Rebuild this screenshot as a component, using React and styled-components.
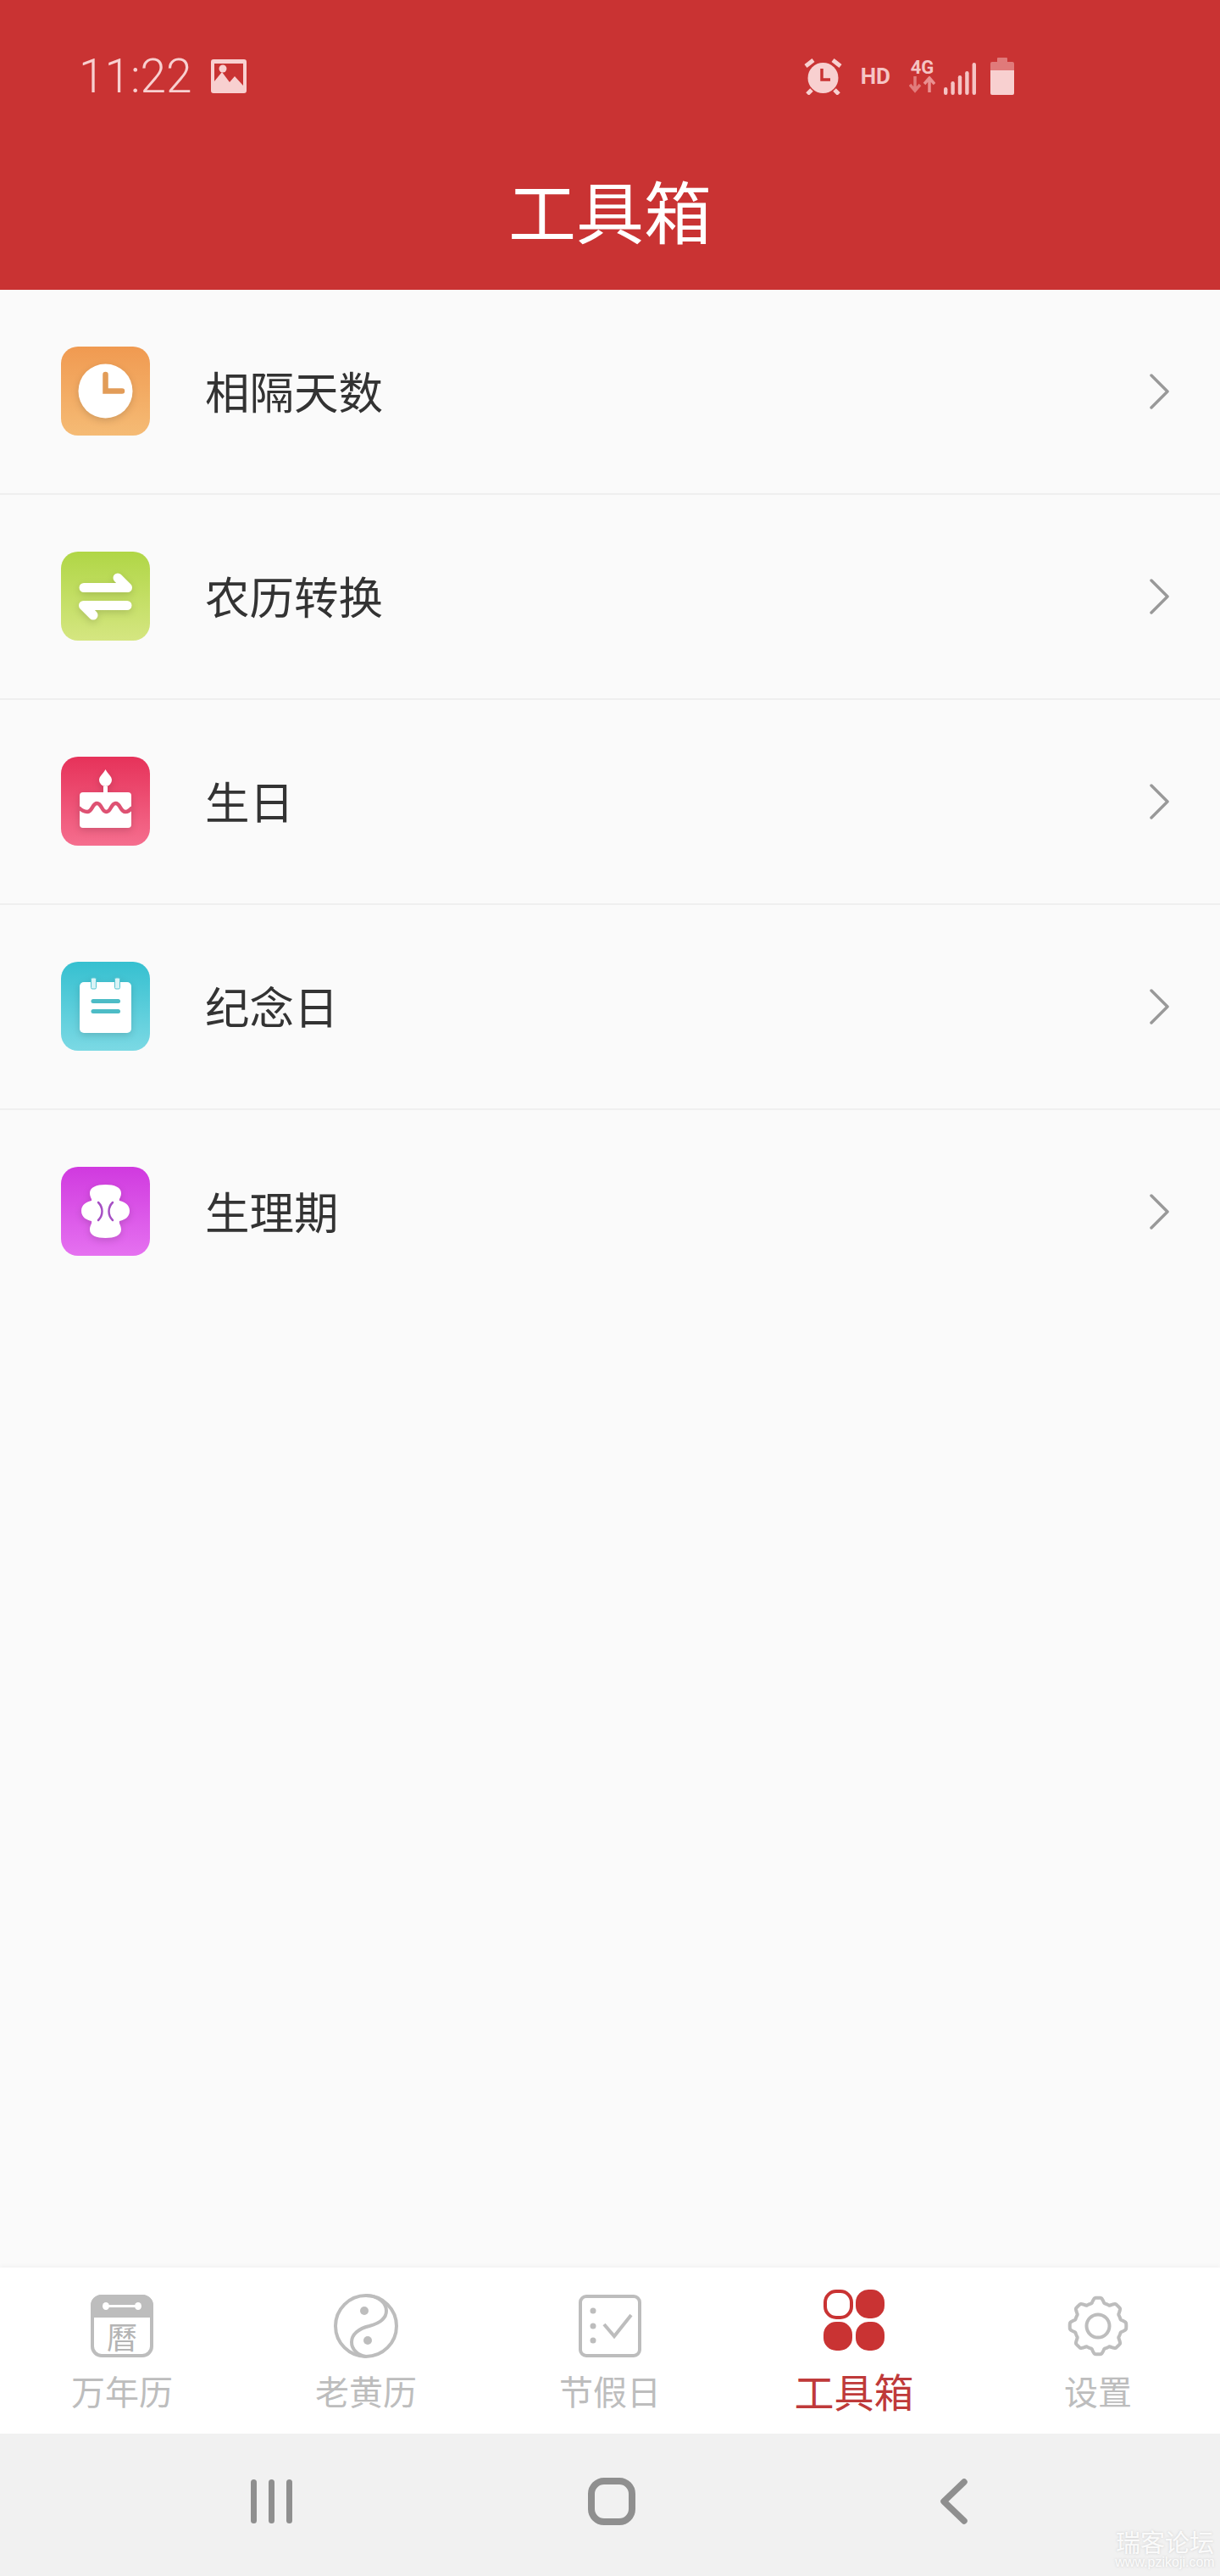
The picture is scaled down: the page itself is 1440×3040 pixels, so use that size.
import React from 'react';
import styled, { createGlobalStyle } from 'styled-components';

const CJK = `"Noto Sans CJK SC", "Noto Sans", sans-serif`;
const RED = '#c93333';
const GREY = '#bdbdbd';

const GlobalStyle = createGlobalStyle`
  html, body {
    margin: 0;
    padding: 0;
    background: #fafafa;
  }
`;

const Page = styled.div`
  position: relative;
  display: flex;
  flex-direction: column;
  width: 1440px;
  height: 3040px;
  overflow: hidden;
  background: #fafafa;
  font-family: ${CJK};
`;

const Header = styled.header`
  display: flex;
  flex-direction: column;
  flex: none;
  height: 342px;
  background: ${RED};
`;

const StatusBar = styled.div`
  display: flex;
  align-items: flex-start;
  justify-content: space-between;
  height: 44px;
  margin-top: 68px;
  padding: 0 243px 0 93px;
`;

const StatusGroup = styled.div`
  display: flex;
  align-items: flex-start;
`;

const Clock = styled.span`
  margin-right: 22px;
  font-family: Roboto, sans-serif;
  font-size: 55px;
  font-weight: 300;
  line-height: 44px;
  color: #f8d0d0;
`;

const StatusIcon = styled.svg`
  display: block;
  flex: none;
  margin-left: ${({ $gap }) => $gap || 0}px;
`;

const HdLabel = styled.span`
  margin: 6px 22px 0 22px;
  font-family: Roboto, sans-serif;
  font-size: 26px;
  font-weight: 700;
  line-height: 32px;
  color: #f5c4c4;
`;

const NetworkStack = styled.div`
  display: flex;
  flex-direction: column;
  align-items: center;
  width: 31px;
  margin-top: 2px;
`;

const NetworkLabel = styled.span`
  font-family: Roboto, sans-serif;
  font-size: 22px;
  font-weight: 700;
  line-height: 20px;
  color: #f5c4c4;
`;

const Title = styled.h1`
  flex: 1;
  display: flex;
  align-items: center;
  justify-content: center;
  margin: 0;
  padding-top: 37px;
  font-size: 80px;
  font-weight: 400;
  line-height: 1;
  color: #fff;
`;

const ToolList = styled.main`
  flex: 1;
`;

const ToolRow = styled.div`
  display: flex;
  align-items: center;
  box-sizing: border-box;
  height: 242px;
  padding: 0 60px 0 72px;
  border-bottom: 2px solid ${({ $last }) => ($last ? 'transparent' : '#efefef')};
`;

const ToolBadge = styled.div`
  flex: none;
  width: 105px;
  height: 105px;
  margin-bottom: 2px;
  border-radius: 20px;
  background: linear-gradient(180deg, ${({ $from }) => $from}, ${({ $to }) => $to});

  svg {
    display: block;
    filter: drop-shadow(0 3px 4px rgba(0, 0, 0, 0.14));
  }
`;

const ToolName = styled.span`
  flex: 1;
  margin-left: 65px;
  padding-bottom: 3px;
  font-size: 52.5px;
  line-height: 1;
  color: #333;
`;

const TabBar = styled.nav`
  display: flex;
  flex: none;
  height: 196px;
  background: #fff;
  box-shadow: 0 -2px 5px rgba(0, 0, 0, 0.035);
`;

const Tab = styled.div`
  display: flex;
  flex: 1;
  flex-direction: column;
  align-items: center;
  padding-top: 24px;
`;

const TabIcon = styled.div`
  display: flex;
  align-items: center;
  justify-content: center;
  height: 90px;
  padding-bottom: ${({ $active }) => ($active ? 14 : 0)}px;
  box-sizing: border-box;

  svg {
    display: block;
  }
`;

const TabLabel = styled.span`
  margin-top: 6px;
  font-size: ${({ $active }) => ($active ? 47 : 40)}px;
  font-weight: 400;
  line-height: 50px;
  color: ${({ $active }) => ($active ? '#bf3a3a' : GREY)};
`;

const SystemNav = styled.div`
  display: flex;
  flex: none;
  align-items: center;
  box-sizing: border-box;
  height: 168px;
  padding: 0 0 8px 296px;
  background: #f1f1f1;
`;

const RecentBars = styled.div`
  display: flex;
  gap: 14px;
`;

const RecentBar = styled.span`
  width: 7px;
  height: 52px;
  border-radius: 4px;
  background: #8f8f8f;
`;

const HomeButton = styled.span`
  box-sizing: border-box;
  width: 56px;
  height: 56px;
  margin-left: 349px;
  border: 8px solid #8f8f8f;
  border-radius: 19px;
`;

const BackButton = styled.svg`
  display: block;
  margin-left: 360px;
`;

const Watermark = styled.div`
  position: absolute;
  right: 6px;
  bottom: 6px;
  width: 118px;
  text-align: center;
  color: rgba(255, 255, 255, 0.9);
  text-shadow: 0 0 3px rgba(120, 120, 120, 0.3);
`;

const WatermarkName = styled.div`
  font-size: 29px;
  line-height: 30px;
  white-space: nowrap;
`;

const WatermarkSite = styled.div`
  font-family: "Liberation Sans", sans-serif;
  font-size: 16px;
  line-height: 20px;
  white-space: nowrap;
`;

function AlarmIcon() {
  return (
    <StatusIcon width="45" height="44" viewBox="0 0 45 44">
      <g stroke="#f8d0d0" strokeWidth="5" strokeLinecap="butt" fill="none">
        <path d="M2 10l9-7M43 10l-9-7M9 38l-5 5M36 38l5 5" />
      </g>
      <circle cx="22.5" cy="24" r="18" fill="#f8d0d0" />
      <path d="M21 13v13h10" fill="none" stroke={RED} strokeWidth="3.5" />
    </StatusIcon>
  );
}

function ImageIcon() {
  return (
    <StatusIcon width="42" height="40" viewBox="0 0 42 40" style={{ marginTop: 2 }}>
      <path
        fillRule="evenodd"
        fill="#f8d0d0"
        d="M3 0h36a3 3 0 0 1 3 3v34a3 3 0 0 1-3 3H3a3 3 0 0 1-3-3V3a3 3 0 0 1 3-3zM4 5v21l9-11 9 12 6-7 10 11V5z"
      />
      <circle cx="14" cy="11" r="4.5" fill="#f8d0d0" />
    </StatusIcon>
  );
}

function NetworkArrows() {
  return (
    <svg width="31" height="20" viewBox="0 0 31 20" style={{ display: 'block' }}>
      <path d="M7 0v16M1 10l6 7 6-7" fill="none" stroke="#e27c7c" strokeWidth="3.5" />
      <path d="M24 19V3M18 9l6-7 6 7" fill="none" stroke="#ea9090" strokeWidth="3.5" />
    </svg>
  );
}

function SignalIcon() {
  const bars = [9, 16, 23, 28, 38];
  return (
    <StatusIcon $gap={10} width="38" height="44" viewBox="0 0 38 44" style={{ marginTop: 1 }}>
      {bars.map((h, i) => (
        <rect key={i} x={i * 8.4} y={43 - h} width="4.4" height={h} rx="2.2" fill="#f5c4c4" />
      ))}
    </StatusIcon>
  );
}

function BatteryIcon() {
  return (
    <StatusIcon $gap={17} width="28" height="44" viewBox="0 0 28 44">
      <path d="M8 5V1a1 1 0 0 1 1-1h10a1 1 0 0 1 1 1v4h6a2 2 0 0 1 2 2v8H0V7a2 2 0 0 1 2-2z" fill="#e07a7a" />
      <path d="M0 15h28v27a2 2 0 0 1-2 2H2a2 2 0 0 1-2-2z" fill="#f8d0d0" />
    </StatusIcon>
  );
}

function ClockGlyph() {
  return (
    <svg width="105" height="105" viewBox="0 0 105 105">
      <circle cx="52.5" cy="52.5" r="32" fill="#fff" />
      <path
        d="M52.5 33v19.5H72"
        fill="none"
        stroke="#e29c58"
        strokeWidth="6.5"
        strokeLinecap="round"
        strokeLinejoin="miter"
      />
    </svg>
  );
}

function SwapGlyph() {
  return (
    <svg width="105" height="105" viewBox="0 0 105 105">
      <path
        d="M27 42.5h51.5L67 31M78 63.5H26.5L38 75"
        fill="none"
        stroke="#fff"
        strokeWidth="11"
        strokeLinecap="round"
        strokeLinejoin="round"
      />
    </svg>
  );
}

function CakeGlyph() {
  return (
    <svg width="105" height="105" viewBox="0 0 105 105">
      <path d="M52.5 15C55 20 60 23 60 27.500a7.500 7.500 0 0 1-15 0C45 23 50 20 52.500 15z" fill="#fff" />
      <rect x="50" y="35" width="5" height="9" fill="#fff" />
      <rect x="22" y="42" width="61" height="42" rx="4" fill="#fff" />
      <path
        d="M21 60Q26 65 31 65C37 65 37 55 42.500 55S48 65 53.500 65 59 55 64.500 55 70 65 76 65Q80 65 84 60"
        fill="none"
        stroke="#de5273"
        strokeWidth="4.500"
      />
    </svg>
  );
}

function NoteGlyph() {
  return (
    <svg width="105" height="105" viewBox="0 0 105 105">
      <rect x="22" y="24" width="61" height="60" rx="5" fill="#fff" />
      <rect x="35.500" y="19" width="6" height="13" rx="1.500" fill="#d9f3f6" stroke="#58c6d3" strokeWidth="1" />
      <rect x="63.500" y="19" width="6" height="13" rx="1.500" fill="#d9f3f6" stroke="#58c6d3" strokeWidth="1" />
      <rect x="35.500" y="44" width="34.500" height="5" rx="2.500" fill="#4dbcc6" />
      <rect x="35.500" y="56" width="34.500" height="5" rx="2.500" fill="#4dbcc6" />
    </svg>
  );
}

function PadGlyph() {
  return (
    <svg width="105" height="105" viewBox="0 0 105 105">
      <path
        fill="#fff"
        d="M52.500 21C63 21 71 24 71 31 71 36 68 38 69 40 74 41 81 44 81 52S74 63 69 64C68 67 71 69 71 74 71 81 63 84 52.500 84S34 81 34 74C34 69 37 67 36 64 31 63 24 60 24 52S31 41 36 40C37 38 34 36 34 31 34 24 42 21 52.500 21Z"
      />
      <path
        d="M44 42c6 6 6 15 0 21M61 42c-6 6-6 15 0 21"
        fill="none"
        stroke="#a650c4"
        strokeWidth="2.500"
        strokeLinecap="round"
      />
    </svg>
  );
}

function ChevronRight() {
  return (
    <svg width="24" height="44" viewBox="0 0 24 44" style={{ display: 'block', flex: 'none' }}>
      <path
        d="M3 3l19 19L3 41"
        fill="none"
        stroke="#999"
        strokeWidth="3.500"
        strokeLinecap="round"
        strokeLinejoin="round"
      />
    </svg>
  );
}

function CalendarTabIcon() {
  return (
    <svg width="74" height="74" viewBox="0 0 74 74">
      <rect x="2" y="2" width="70" height="70" rx="11" fill="#fff" stroke={GREY} strokeWidth="4" />
      <path d="M13 0h48a13 13 0 0 1 13 13v14H0V13A13 13 0 0 1 13 0z" fill={GREY} />
      <path d="M19 13.500h36" stroke="#fff" strokeWidth="3" />
      <ellipse cx="18" cy="13.500" rx="4" ry="4.500" fill="#fff" />
      <ellipse cx="56" cy="13.500" rx="4" ry="4.500" fill="#fff" />
      <text
        x="37"
        y="64"
        textAnchor="middle"
        fontSize="36"
        fontFamily='"Noto Sans CJK TC", serif'
        fill="#b4b4b4"
      >
        曆
      </text>
    </svg>
  );
}

function TaijiTabIcon() {
  return (
    <svg width="76" height="76" viewBox="0 0 76 76">
      <g fill="none" stroke={GREY} strokeWidth="4">
        <circle cx="38" cy="38" r="36" />
        <path d="M38 2c15 0 24 9 24 18 0 10-9 15-20 18-13 3-21 10-21 19 0 9 8 16 17 17" />
      </g>
      <circle cx="36" cy="20" r="5" fill={GREY} />
      <circle cx="40" cy="55" r="5" fill={GREY} />
    </svg>
  );
}

function ChecklistTabIcon() {
  return (
    <svg width="74" height="74" viewBox="0 0 74 74">
      <rect x="2" y="2" width="70" height="70" rx="7" fill="none" stroke={GREY} strokeWidth="4" />
      <circle cx="17" cy="19" r="3.500" fill={GREY} />
      <circle cx="17" cy="37" r="3.500" fill={GREY} />
      <circle cx="17" cy="54" r="3.500" fill={GREY} />
      <path d="M30 35l12 14 20-25" fill="none" stroke={GREY} strokeWidth="4" />
    </svg>
  );
}

function ToolsTabIcon() {
  return (
    <svg width="72" height="72" viewBox="0 0 72 72">
      <rect x="2" y="2" width="31" height="31" rx="13" fill="none" stroke={RED} strokeWidth="4" />
      <rect x="38" y="0" width="34" height="34" rx="15" fill={RED} />
      <rect x="0" y="38" width="34" height="34" rx="15" fill={RED} />
      <rect x="38" y="38" width="34" height="34" rx="15" fill={RED} />
    </svg>
  );
}

// scalloped outline for the settings cog, eight flat-topped teeth
function gearPath(cx, cy, radius, depth) {
  const points = [];
  for (let i = 0; i < 240; i += 1) {
    const angle = (i / 240) * Math.PI * 2;
    const wave = Math.max(-1, Math.min(1, 1.7 * Math.cos(angle * 8)));
    const r = radius + depth * wave;
    points.push(`${(cx + r * Math.sin(angle)).toFixed(2)} ${(cy - r * Math.cos(angle)).toFixed(2)}`);
  }
  return `M${points.join('L')}Z`;
}

function GearTabIcon() {
  return (
    <svg width="72" height="72" viewBox="0 0 72 72">
      <path d={gearPath(36, 36, 30.5, 2.800)} fill="none" stroke={GREY} strokeWidth="4" strokeLinejoin="round" />
      <circle cx="36" cy="36" r="13.500" fill="none" stroke={GREY} strokeWidth="4" />
    </svg>
  );
}

const tools = [
  { name: '相隔天数', from: '#f09a51', to: '#f5bb75', Glyph: ClockGlyph },
  { name: '农历转换', from: '#b0d646', to: '#d5e681', Glyph: SwapGlyph },
  { name: '生日', from: '#e6325a', to: '#f56e8e', Glyph: CakeGlyph },
  { name: '纪念日', from: '#36c0d0', to: '#7bd9e4', Glyph: NoteGlyph },
  { name: '生理期', from: '#d03adf', to: '#e571f0', Glyph: PadGlyph },
];

const tabs = [
  { label: '万年历', Icon: CalendarTabIcon },
  { label: '老黄历', Icon: TaijiTabIcon },
  { label: '节假日', Icon: ChecklistTabIcon },
  { label: '工具箱', Icon: ToolsTabIcon, active: true },
  { label: '设置', Icon: GearTabIcon },
];

export default function App() {
  return (
    <>
      <GlobalStyle />
      <Page>
        <Header>
          <StatusBar>
            <StatusGroup>
              <Clock>11:22</Clock>
              <ImageIcon />
            </StatusGroup>
            <StatusGroup>
              <AlarmIcon />
              <HdLabel>HD</HdLabel>
              <NetworkStack>
                <NetworkLabel>4G</NetworkLabel>
                <NetworkArrows />
              </NetworkStack>
              <SignalIcon />
              <BatteryIcon />
            </StatusGroup>
          </StatusBar>
          <Title>工具箱</Title>
        </Header>

        <ToolList>
          {tools.map(({ name, from, to, Glyph }, i) => (
            <ToolRow key={name} $last={i === tools.length - 1}>
              <ToolBadge $from={from} $to={to}>
                <Glyph />
              </ToolBadge>
              <ToolName>{name}</ToolName>
              <ChevronRight />
            </ToolRow>
          ))}
        </ToolList>

        <TabBar>
          {tabs.map(({ label, Icon, active }) => (
            <Tab key={label}>
              <TabIcon $active={active}>
                <Icon />
              </TabIcon>
              <TabLabel $active={active}>{label}</TabLabel>
            </Tab>
          ))}
        </TabBar>

        <SystemNav>
          <RecentBars>
            <RecentBar />
            <RecentBar />
            <RecentBar />
          </RecentBars>
          <HomeButton />
          <BackButton width="32" height="54" viewBox="0 0 32 54">
            <path
              d="M28 4L4 27l24 23"
              fill="none"
              stroke="#8f8f8f"
              strokeWidth="7.500"
              strokeLinecap="round"
              strokeLinejoin="round"
            />
          </BackButton>
        </SystemNav>

        <Watermark>
          <WatermarkName>瑞客论坛</WatermarkName>
          <WatermarkSite>www.pzikoji.com</WatermarkSite>
        </Watermark>
      </Page>
    </>
  );
}
